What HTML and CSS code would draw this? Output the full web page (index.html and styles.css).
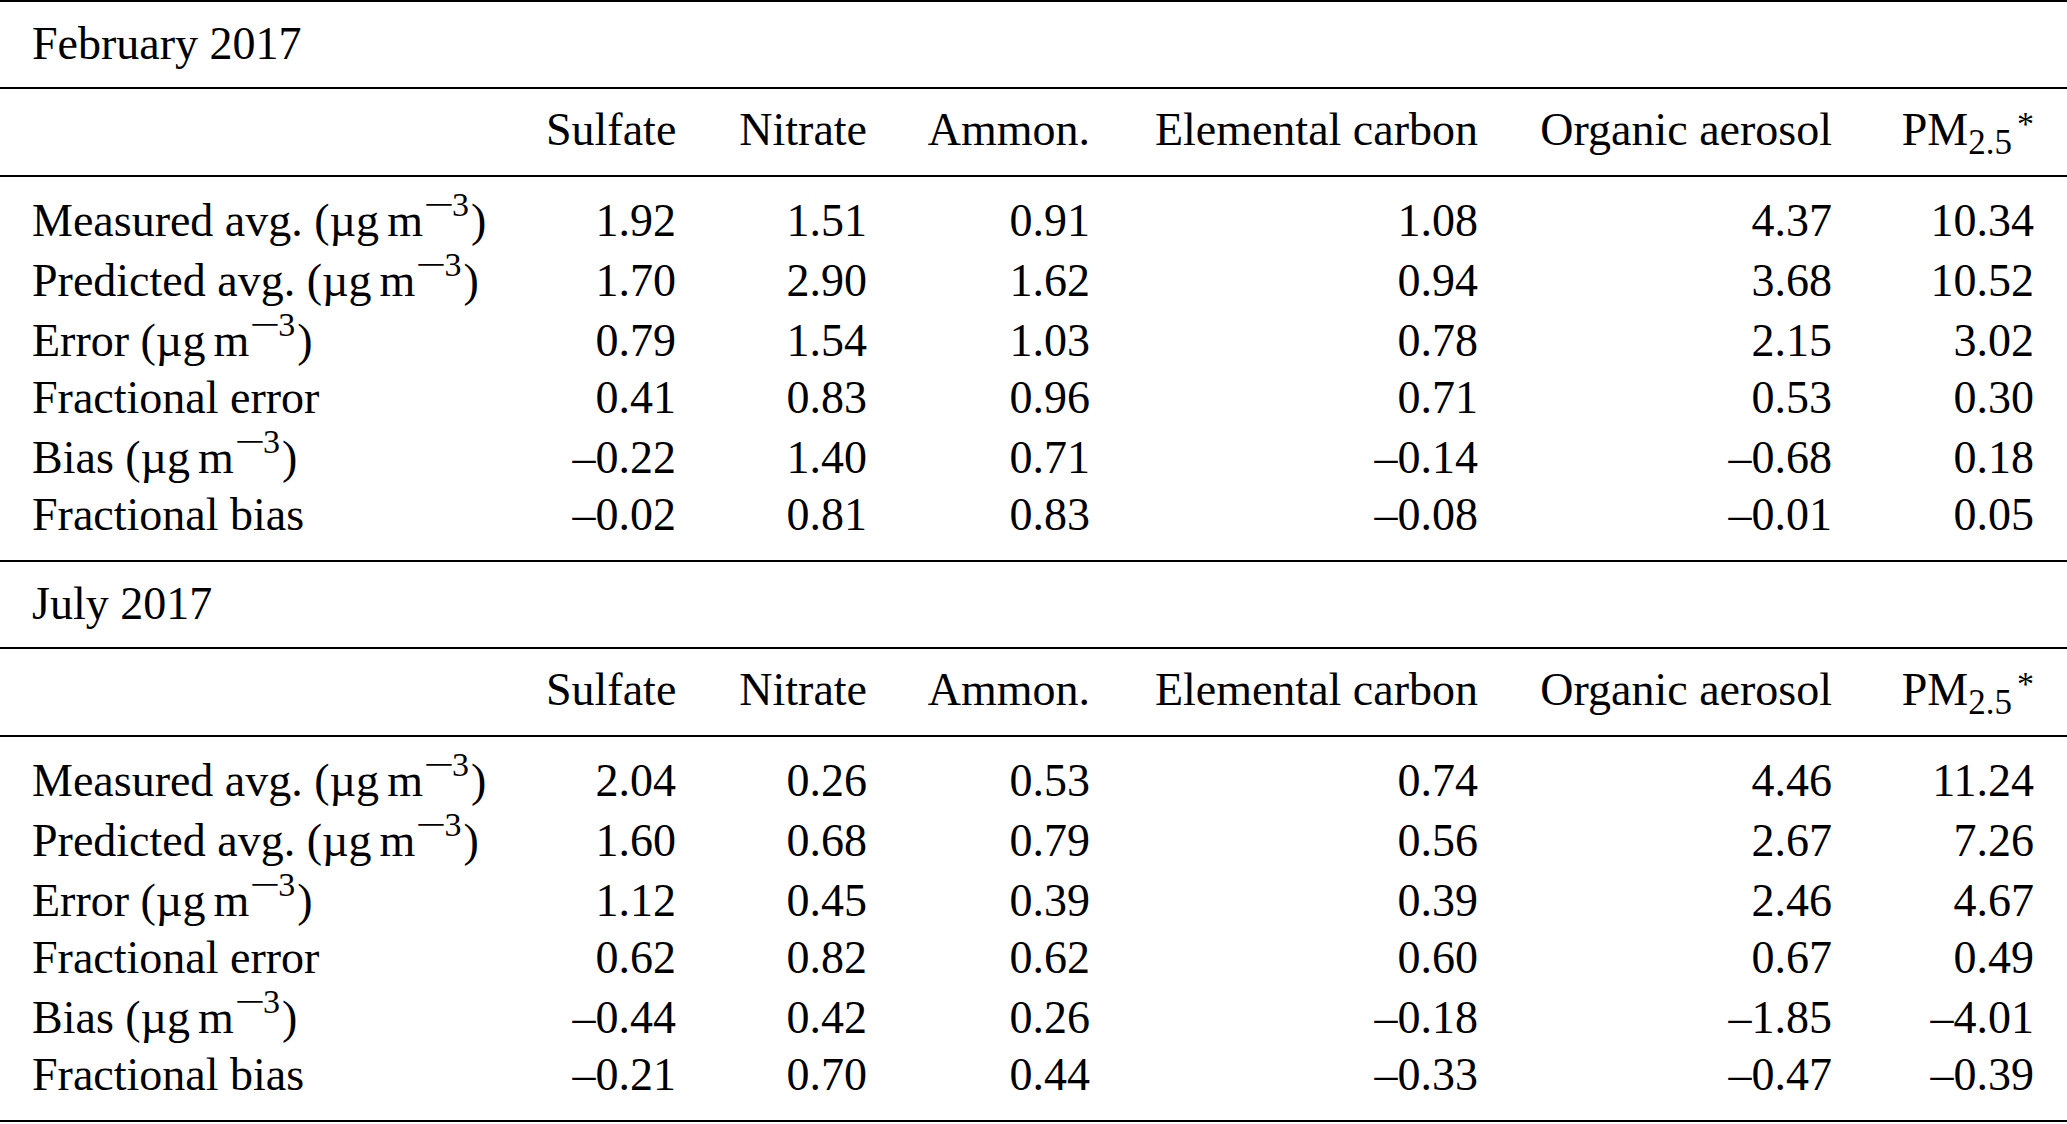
FILE: index.html
```html
<!DOCTYPE html>
<html lang="en">
<head>
<meta charset="utf-8">
<title>Model evaluation</title>
<link rel="stylesheet" href="styles.css">
</head>
<body>
<div class="table">
  <section class="block">
    <div class="title">February 2017</div>
    <div class="row head">
      <div class="cell"></div>
      <div class="cell">Sulfate</div>
      <div class="cell">Nitrate</div>
      <div class="cell">Ammon.</div>
      <div class="cell">Elemental carbon</div>
      <div class="cell">Organic aerosol</div>
      <div class="cell">PM<span class="sub">2.5</span><span class="star">*</span></div>
    </div>
    <div class="body">
      <div class="row unit">
        <div class="cell">Measured avg. (µg<span class="thin"></span>m<span class="sup"><span class="minus">−</span>3</span>)</div>
        <div class="cell">1.92</div><div class="cell">1.51</div><div class="cell">0.91</div><div class="cell">1.08</div><div class="cell">4.37</div><div class="cell">10.34</div>
      </div>
      <div class="row unit">
        <div class="cell">Predicted avg. (µg<span class="thin"></span>m<span class="sup"><span class="minus">−</span>3</span>)</div>
        <div class="cell">1.70</div><div class="cell">2.90</div><div class="cell">1.62</div><div class="cell">0.94</div><div class="cell">3.68</div><div class="cell">10.52</div>
      </div>
      <div class="row unit">
        <div class="cell">Error (µg<span class="thin"></span>m<span class="sup"><span class="minus">−</span>3</span>)</div>
        <div class="cell">0.79</div><div class="cell">1.54</div><div class="cell">1.03</div><div class="cell">0.78</div><div class="cell">2.15</div><div class="cell">3.02</div>
      </div>
      <div class="row plain">
        <div class="cell">Fractional error</div>
        <div class="cell">0.41</div><div class="cell">0.83</div><div class="cell">0.96</div><div class="cell">0.71</div><div class="cell">0.53</div><div class="cell">0.30</div>
      </div>
      <div class="row unit">
        <div class="cell">Bias (µg<span class="thin"></span>m<span class="sup"><span class="minus">−</span>3</span>)</div>
        <div class="cell">–0.22</div><div class="cell">1.40</div><div class="cell">0.71</div><div class="cell">–0.14</div><div class="cell">–0.68</div><div class="cell">0.18</div>
      </div>
      <div class="row plain">
        <div class="cell">Fractional bias</div>
        <div class="cell">–0.02</div><div class="cell">0.81</div><div class="cell">0.83</div><div class="cell">–0.08</div><div class="cell">–0.01</div><div class="cell">0.05</div>
      </div>
    </div>
  </section>
  <section class="block">
    <div class="title">July 2017</div>
    <div class="row head">
      <div class="cell"></div>
      <div class="cell">Sulfate</div>
      <div class="cell">Nitrate</div>
      <div class="cell">Ammon.</div>
      <div class="cell">Elemental carbon</div>
      <div class="cell">Organic aerosol</div>
      <div class="cell">PM<span class="sub">2.5</span><span class="star">*</span></div>
    </div>
    <div class="body">
      <div class="row unit">
        <div class="cell">Measured avg. (µg<span class="thin"></span>m<span class="sup"><span class="minus">−</span>3</span>)</div>
        <div class="cell">2.04</div><div class="cell">0.26</div><div class="cell">0.53</div><div class="cell">0.74</div><div class="cell">4.46</div><div class="cell">11.24</div>
      </div>
      <div class="row unit">
        <div class="cell">Predicted avg. (µg<span class="thin"></span>m<span class="sup"><span class="minus">−</span>3</span>)</div>
        <div class="cell">1.60</div><div class="cell">0.68</div><div class="cell">0.79</div><div class="cell">0.56</div><div class="cell">2.67</div><div class="cell">7.26</div>
      </div>
      <div class="row unit">
        <div class="cell">Error (µg<span class="thin"></span>m<span class="sup"><span class="minus">−</span>3</span>)</div>
        <div class="cell">1.12</div><div class="cell">0.45</div><div class="cell">0.39</div><div class="cell">0.39</div><div class="cell">2.46</div><div class="cell">4.67</div>
      </div>
      <div class="row plain">
        <div class="cell">Fractional error</div>
        <div class="cell">0.62</div><div class="cell">0.82</div><div class="cell">0.62</div><div class="cell">0.60</div><div class="cell">0.67</div><div class="cell">0.49</div>
      </div>
      <div class="row unit">
        <div class="cell">Bias (µg<span class="thin"></span>m<span class="sup"><span class="minus">−</span>3</span>)</div>
        <div class="cell">–0.44</div><div class="cell">0.42</div><div class="cell">0.26</div><div class="cell">–0.18</div><div class="cell">–1.85</div><div class="cell">–4.01</div>
      </div>
      <div class="row plain">
        <div class="cell">Fractional bias</div>
        <div class="cell">–0.21</div><div class="cell">0.70</div><div class="cell">0.44</div><div class="cell">–0.33</div><div class="cell">–0.47</div><div class="cell">–0.39</div>
      </div>
    </div>
  </section>
</div>
</body>
</html>
```

FILE: styles.css
```css
* {
  box-sizing: border-box;
}

html, body {
  margin: 0;
  padding: 0;
  background: #ffffff;
}

body {
  font-family: "Liberation Serif", "Times New Roman", serif;
  font-size: 46px;
  color: #000000;
}

.table {
  width: 2067px;
  border-bottom: 2px solid #000000;
}

.block {
  border-top: 2px solid #000000;
}

.title {
  height: 87px;
  padding: 14px 0 0 32px;
  line-height: 55px;
  border-bottom: 2px solid #000000;
  white-space: nowrap;
}

.row {
  display: grid;
  grid-template-columns: 514px 130px 191px 223px 388px 354px 202px;
  padding: 0 33px 0 32px;
  line-height: 55px;
  white-space: nowrap;
}

.row .cell {
  text-align: right;
}

.row .cell:first-child {
  text-align: left;
}

.head {
  height: 88px;
  padding-top: 13px;
  border-bottom: 2px solid #000000;
}

.body {
  height: 383px;
  padding: 11px 0 18px;
}

.unit {
  padding-top: 5px;
}

.plain {
  padding-top: 2px;
}

.thin {
  display: inline-block;
  width: 8px;
}

.sup {
  font-size: 34px;
  line-height: 0;
  vertical-align: 20px;
  margin-right: 2px;
}

.minus {
  display: inline-block;
  transform: scaleX(1.6);
  margin: 0 4px 0 6px;
}

.sub {
  font-size: 35px;
  line-height: 0;
  vertical-align: -9px;
}

.star {
  font-size: 34px;
  line-height: 0;
  vertical-align: 10px;
  margin-left: 5px;
}
```
